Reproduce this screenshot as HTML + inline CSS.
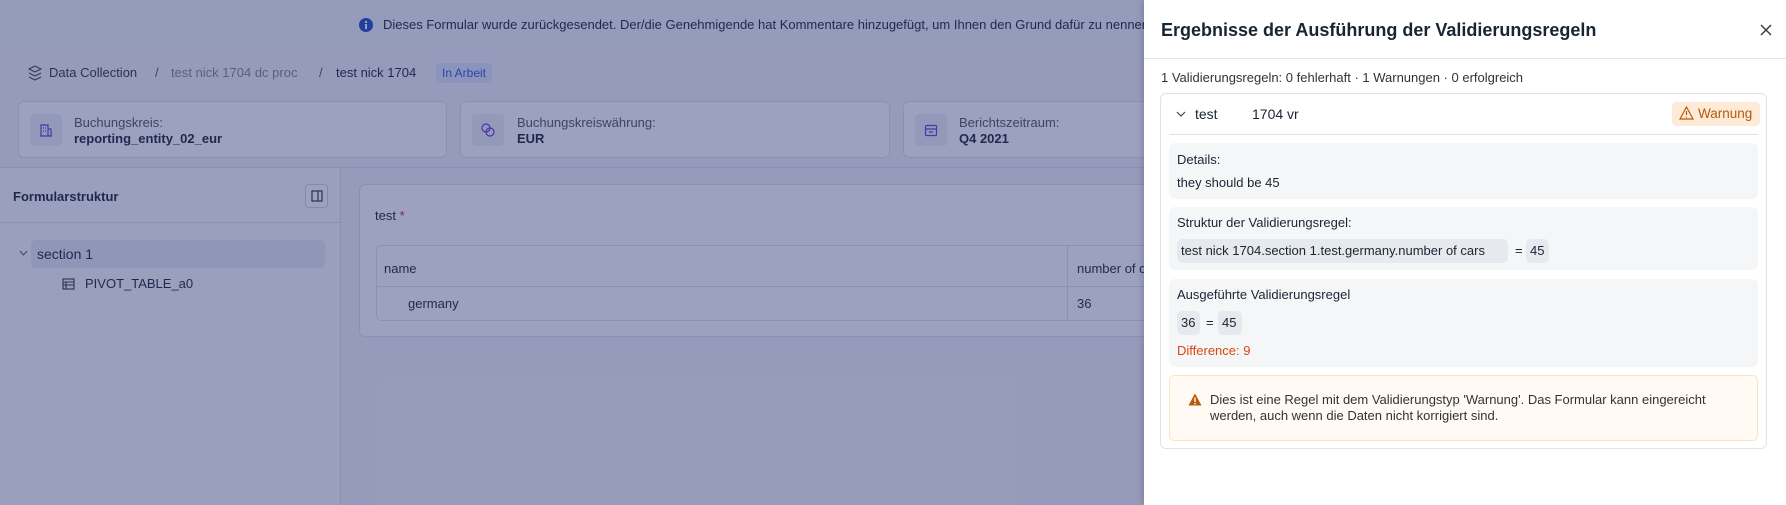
<!DOCTYPE html>
<html><head><meta charset="utf-8"><style>
*{box-sizing:border-box;margin:0;padding:0}
body{width:1786px;height:505px;overflow:hidden;position:relative;font-family:"Liberation Sans",sans-serif;font-size:13px;color:#1c2433;background:#f4f5f7}
.abs{position:absolute}
.t{position:absolute;white-space:nowrap;line-height:16px}
#ov{position:absolute;left:0;top:0;width:1786px;height:505px;background:rgba(36,47,112,0.45)}
.card{position:absolute;background:#fff;border:1px solid #dfe2e8;border-radius:6px}
#panel{position:absolute;left:1144px;top:0;width:642px;height:505px;background:#fff;box-shadow:-2px 0 6px rgba(0,0,0,.15)}
.box{position:absolute;left:25px;width:589px;background:#f4f6f8;border-radius:6px}
.chip{position:absolute;background:#e6e9ee;border-radius:5px;height:24px;line-height:24px;padding:0 4px;font-size:13px}
</style></head><body>
<div class="abs" style="left:0;top:0;width:1786px;height:48px;background:#f3f4f7"></div>
<svg class="abs" style="left:359px;top:18px" width="14" height="14"><circle cx="7" cy="7" r="7" fill="#1f4fbf"/><rect x="6" y="6" width="2" height="5" fill="#fff"/><rect x="6" y="3" width="2" height="2" fill="#fff"/></svg>
<div class="t" style="left:383px;top:17px">Dieses Formular wurde zurückgesendet. Der/die Genehmigende hat Kommentare hinzugefügt, um Ihnen den Grund dafür zu nennen.</div>
<svg class="abs" style="left:28px;top:65px" width="14" height="16" fill="none" stroke="#444" stroke-width="1.2"><path d="M7 1 L13 4 L7 7 L1 4Z M1 8 L7 11 L13 8 M1 12 L7 15 L13 12"/></svg>
<div class="t" style="left:49px;top:65px;color:#333">Data Collection</div>
<div class="t" style="left:155px;top:65px;color:#555">/</div>
<div class="t" style="left:171px;top:65px;color:#888">test nick 1704 dc proc</div>
<div class="t" style="left:319px;top:65px;color:#555">/</div>
<div class="t" style="left:336px;top:65px">test nick 1704</div>
<div class="abs" style="left:436px;top:63px;width:56px;height:20px;background:#dfe7fb;border-radius:4px;color:#2c5bd6;font-size:12px;line-height:20px;text-align:center">In Arbeit</div>
<div class="card" style="left:18px;top:101px;width:429px;height:57px"></div>
<div class="card" style="left:460px;top:101px;width:430px;height:57px"></div>
<div class="card" style="left:903px;top:101px;width:430px;height:57px"></div>
<div class="abs" style="left:30px;top:114px;width:32px;height:32px;background:#eef0f4;border-radius:4px"></div>
<div class="abs" style="left:472px;top:114px;width:32px;height:32px;background:#eef0f4;border-radius:4px"></div>
<div class="abs" style="left:915px;top:114px;width:32px;height:32px;background:#eef0f4;border-radius:4px"></div>
<svg class="abs" style="left:39px;top:123px" width="14" height="14" fill="none" stroke="#6b3fd6" stroke-width="1.2"><path d="M2 13V2h7v11M9 6h3v7M1 13h12M4 5h1M6 5h1M4 8h1M6 8h1"/></svg>
<svg class="abs" style="left:481px;top:123px" width="14" height="14" fill="none" stroke="#6b3fd6" stroke-width="1.2"><circle cx="5" cy="5" r="4"/><circle cx="9" cy="9" r="4"/></svg>
<svg class="abs" style="left:924px;top:123px" width="14" height="14" fill="none" stroke="#6b3fd6" stroke-width="1.2"><rect x="1.5" y="2.5" width="11" height="10" rx="1"/><path d="M1.5 6h11M5 9h4"/></svg>
<div class="t" style="left:74px;top:115px;color:#555">Buchungskreis:</div>
<div class="t" style="left:74px;top:131px;font-weight:bold">reporting_entity_02_eur</div>
<div class="t" style="left:517px;top:115px;color:#555">Buchungskreiswährung:</div>
<div class="t" style="left:517px;top:131px;font-weight:bold">EUR</div>
<div class="t" style="left:959px;top:115px;color:#555">Berichtszeitraum:</div>
<div class="t" style="left:959px;top:131px;font-weight:bold">Q4 2021</div>
<div class="abs" style="left:0;top:167px;width:1786px;height:1px;background:#dfe2e8"></div>
<div class="abs" style="left:0;top:168px;width:341px;height:337px;background:#fafbfc;border-right:1px solid #dfe2e8"></div>
<div class="abs" style="left:0;top:222px;width:341px;height:1px;background:#dfe2e8"></div>
<div class="t" style="left:13px;top:189px;font-weight:bold">Formularstruktur</div>
<div class="abs" style="left:305px;top:184px;width:23px;height:24px;border:1px solid #cfd4dc;border-radius:4px;background:#fff"></div>
<svg class="abs" style="left:311px;top:190px" width="12" height="12" fill="none" stroke="#333" stroke-width="1.2"><rect x="1" y="1" width="10" height="10"/><path d="M7 1v10"/></svg>
<div class="abs" style="left:31px;top:240px;width:294px;height:28px;background:#e9ebf0;border-radius:5px"></div>
<svg class="abs" style="left:19px;top:250px" width="9" height="6" fill="none" stroke="#555"><path d="M1 1l3.5 4L8 1"/></svg>
<div class="t" style="left:37px;top:246px;font-size:14px">section 1</div>
<svg class="abs" style="left:62px;top:278px" width="13" height="12" fill="none" stroke="#333" stroke-width="1.1"><rect x="1" y="1" width="11" height="10"/><path d="M1 4h11M1 7h11M4 4v7"/></svg>
<div class="t" style="left:85px;top:276px">PIVOT_TABLE_a0</div>
<div class="card" style="left:359px;top:184px;width:900px;height:153px"></div>
<div class="t" style="left:375px;top:208px">test <span style="color:#c92a2a">*</span></div>
<div class="abs" style="left:376px;top:245px;width:900px;height:76px;border:1px solid #dfe2e8;border-radius:5px;background:#fff"></div>
<div class="abs" style="left:377px;top:286px;width:900px;height:1px;background:#dfe2e8"></div>
<div class="abs" style="left:1067px;top:246px;width:1px;height:74px;background:#dfe2e8"></div>
<div class="t" style="left:384px;top:261px">name</div>
<div class="t" style="left:1077px;top:261px">number of cars</div>
<div class="t" style="left:408px;top:296px">germany</div>
<div class="t" style="left:1077px;top:296px">36</div>
<div id="ov"></div>
<div id="panel">
<div class="t" style="left:17px;top:20px;font-size:18px;line-height:21px;font-weight:bold;color:#1a2433">Ergebnisse der Ausführung der Validierungsregeln</div>
<svg class="abs" style="left:616px;top:24px" width="12" height="12" stroke="#333" stroke-width="1.3"><path d="M1 1l10 10M11 1L1 11"/></svg>
<div class="abs" style="left:0;top:58px;width:642px;height:1px;background:#e1e4ea"></div>
<div class="t" style="left:17px;top:70px;color:#333">1 Validierungsregeln: 0 fehlerhaft · 1 Warnungen · 0 erfolgreich</div>
<div class="abs" style="left:16px;top:93px;width:607px;height:356px;border:1px solid #dfe2e8;border-radius:6px"></div>
<svg class="abs" style="left:32px;top:111px" width="10" height="6" fill="none" stroke="#444" stroke-width="1.2"><path d="M1 1l4 4 4-4"/></svg>
<div class="t" style="left:51px;top:106px;font-size:14px">test</div>
<div class="t" style="left:108px;top:106px;font-size:14px">1704 vr</div>
<div class="abs" style="left:528px;top:102px;width:88px;height:24px;background:#fdebd8;border-radius:4px"></div>
<svg class="abs" style="left:535px;top:106px" width="15" height="14" fill="none" stroke="#b45a0a" stroke-width="1.2"><path d="M7.5 1L14 13H1Z M7.5 5v4 M7.5 10.5v1"/></svg>
<div class="t" style="left:554px;top:106px;font-size:13.5px;color:#b45a0a">Warnung</div>
<div class="abs" style="left:25px;top:134px;width:589px;height:1px;background:#dfe2e8"></div>
<div class="box" style="top:143px;height:56px"></div>
<div class="t" style="left:33px;top:152px">Details:</div>
<div class="t" style="left:33px;top:175px">they should be 45</div>
<div class="box" style="top:207px;height:63px"></div>
<div class="t" style="left:33px;top:215px">Struktur der Validierungsregel:</div>
<div class="chip" style="left:33px;top:239px;width:331px">test nick 1704.section 1.test.germany.number of cars</div>
<div class="t" style="left:371px;top:243px">=</div>
<div class="chip" style="left:382px;top:239px;width:23px">45</div>
<div class="box" style="top:279px;height:88px"></div>
<div class="t" style="left:33px;top:287px">Ausgeführte Validierungsregel</div>
<div class="chip" style="left:33px;top:311px;width:23px">36</div>
<div class="t" style="left:62px;top:315px">=</div>
<div class="chip" style="left:74px;top:311px;width:24px">45</div>
<div class="t" style="left:33px;top:343px;color:#d9480f">Difference: 9</div>
<div class="abs" style="left:25px;top:375px;width:589px;height:66px;background:#fffaf3;border:1px solid #fbe3c4;border-radius:5px"></div>
<svg class="abs" style="left:44px;top:393px" width="14" height="13"><path d="M7 0.5L13.5 12.5H0.5Z" fill="#b45a0a"/><rect x="6.3" y="4.5" width="1.4" height="4.5" fill="#fff"/><rect x="6.3" y="10" width="1.4" height="1.4" fill="#fff"/></svg>
<div class="t" style="left:66px;top:392px;color:#333">Dies ist eine Regel mit dem Validierungstyp 'Warnung'. Das Formular kann eingereicht</div>
<div class="t" style="left:66px;top:408px;color:#333">werden, auch wenn die Daten nicht korrigiert sind.</div>
</div>
</body></html>
